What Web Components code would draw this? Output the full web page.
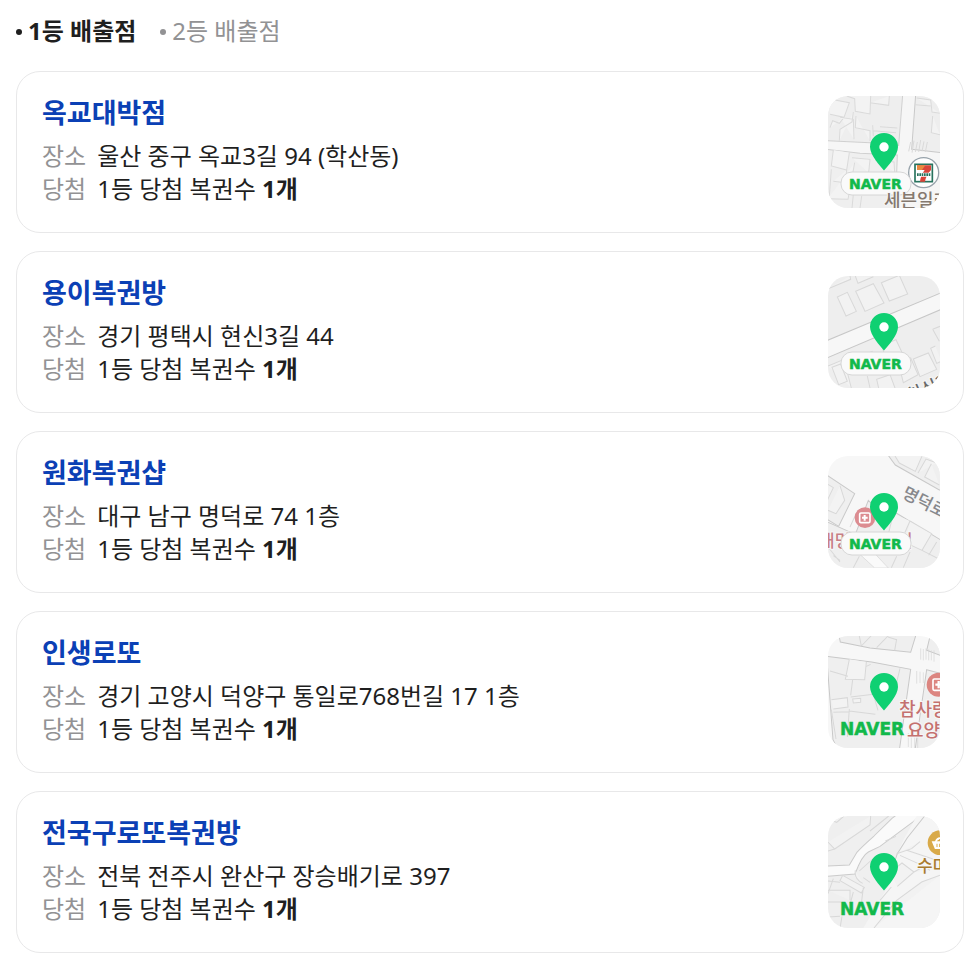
<!DOCTYPE html>
<html lang="ko">
<head>
<meta charset="utf-8">
<meta name="viewport" content="width=device-width, initial-scale=1">
<title>로또 배출점</title>
<style>
  html { background: #fff; }
  body {
    margin: 0;
    color: #1f1f1f;
    font: 24px/33px "Noto Sans", "Noto Sans CJK KR", sans-serif;
  }
</style>
</head>
<body>
<winner-page>
  <rank-tab slot="tabs" selected>1등 배출점</rank-tab>
  <rank-tab slot="tabs">2등 배출점</rank-tab>

  <shop-card name="옥교대박점" place="울산 중구 옥교3길 94 (학산동)" count="1개"><map-thumb slot="map" area="1"></map-thumb></shop-card>
  <shop-card name="용이복권방" place="경기 평택시 현신3길 44" count="1개"><map-thumb slot="map" area="2"></map-thumb></shop-card>
  <shop-card name="원화복권샵" place="대구 남구 명덕로 74 1층" count="1개"><map-thumb slot="map" area="3"></map-thumb></shop-card>
  <shop-card name="인생로또" place="경기 고양시 덕양구 통일로768번길 17 1층" count="1개"><map-thumb slot="map" area="4"></map-thumb></shop-card>
  <shop-card name="전국구로또복권방" place="전북 전주시 완산구 장승배기로 397" count="1개"><map-thumb slot="map" area="5"></map-thumb></shop-card>
</winner-page>

<script>
class WinnerPage extends HTMLElement {
  constructor() {
    super();
    this.attachShadow({ mode: "open" }).innerHTML = `
      <style>
        :host { display: block; padding: 14px 0 6px 16px; }
        nav { display: flex; gap: 24px; margin-bottom: 24px; }
        main { display: flex; flex-direction: column; gap: 18px; }
      </style>
      <nav aria-label="등수"><slot name="tabs"></slot></nav>
      <main><slot></slot></main>`;
  }
}

class RankTab extends HTMLElement {
  constructor() {
    super();
    this.attachShadow({ mode: "open" }).innerHTML = `
      <style>
        :host { display: block; color: #929294; }
        :host([selected]) { color: #1f1f1f; font-weight: 700; }
        button {
          display: flex; align-items: center; gap: 6px;
          margin: 0; padding: 0; border: 0; background: none;
          color: inherit; font: inherit; cursor: pointer;
        }
        button::before {
          content: ""; width: 6px; height: 6px; margin-top: 3px;
          border-radius: 50%; background: currentColor;
        }
      </style>
      <button type="button"><slot></slot></button>`;
    this.shadowRoot.querySelector("button").setAttribute("aria-pressed", this.hasAttribute("selected"));
  }
}

class ShopCard extends HTMLElement {
  connectedCallback() {
    if (this.shadowRoot) return;
    this.attachShadow({ mode: "open" }).innerHTML = `
      <style>
        :host { display: block; }
        article {
          display: flex; align-items: flex-start; justify-content: space-between; gap: 24px;
          padding: 24px 23px 24px 25px;
          border: 1px solid #e8e8e9; border-radius: 24px; background: #fff;
        }
        h3 { margin: 0 0 10px; font-size: 27px; line-height: 33px; font-weight: 700; }
        h3 a { color: #0b40b5; text-decoration: none; }
        dl { display: grid; grid-template-columns: auto 1fr; column-gap: 11px; margin: 0; }
        dt { color: #929294; }
        dd { margin: 0; }
        .map { flex: none; }
      </style>
      <article>
        <div>
          <h3><a href="#"></a></h3>
          <dl>
            <dt>장소</dt><dd class="place"></dd>
            <dt>당첨</dt><dd>1등 당첨 복권수 <b></b></dd>
          </dl>
        </div>
        <a class="map" href="#" aria-label="지도"><slot name="map"></slot></a>
      </article>`;
    const find = (s) => this.shadowRoot.querySelector(s);
    find("h3 a").textContent = this.getAttribute("name");
    find(".place").textContent = this.getAttribute("place");
    find("b").textContent = this.getAttribute("count");
  }
}

/* Streets and blocks are drawn on a grid three times finer than the thumbnail. */
const AREAS = {
  1: { pill: true, over: true, shapes: `
    <rect x="24" y="30" width="336" height="336" fill="#f6f6f6"/>
    <path d="M20 26H248L236 178L150 170L20 164Z" fill="#eee" stroke="#d0d0d0" stroke-width="3"/>
    <path d="M287 26H364V200L275 190Z" fill="#eee" stroke="#c9c9c9" stroke-width="3"/>
    <path d="M20 190L120 202L232 207L226 370H20Z" fill="#efefef" stroke="#d0d0d0" stroke-width="3"/>
    <g fill="#f3f3f3" stroke="#dadada" stroke-width="3">
      <path d="M30 85L72 94L88 50L24 38M72 94L58 112L38 104L30 125M80 30L104 38L106 76L150 84L152 30M150 50L206 58L208 30M100 78L96 108L60 130L58 164M108 90L106 125L150 134V165M60 94L100 100L102 160M158 118L160 150M160 134L228 140M180 122L232 126"/>
      <path d="M40 192L34 240L80 252L88 200M34 250L28 330M80 252L76 290L40 286M96 215L150 220L146 260M165 222L222 228L224 258M104 230L84 340L24 338M100 325L96 366M125 330L120 366"/>
      <path d="M290 36L332 42L336 78L360 82M332 60L286 56M338 90L334 140L360 146"/>
    </g>
    <path d="M272 168L266 196M282 164L276 200M292 168L286 198M302 162L296 198M312 166L306 196M322 168L316 198" stroke="#d9d9d9" stroke-width="3"/>
    <circle cx="311" cy="260" r="45" fill="#fff" stroke="#98a3ab" stroke-width="4"/>
    <rect x="285" y="235" width="52" height="52" fill="#fff" stroke="#28735e" stroke-width="5"/>
    <path d="M291 238H333V252Q318 268 315 287H300Q302 268 314 252H291Z" fill="#d9453a"/>
    <path d="M291 238H316L306 252H291Z" fill="#e98a3f"/>
    <path d="M289 260H333V272H289Z" fill="#fff"/>
    <path d="M291 262H296V270H291ZM298 262H303V270H298ZM305 262H310V270H305ZM312 262H317V270H312ZM319 262H324V270H319ZM326 262H331V270H326Z" fill="#28735e"/>`,
    labels: `<text x="56" y="111" font-size="18" fill="#85796f">세븐일레</text>` },
  2: { pill: true, shapes: `
    <rect x="24" y="30" width="336" height="336" fill="#eee"/>
    <path d="M20 224L364 80V130L20 276Z" fill="#f7f7f7" stroke="#c7c7c7" stroke-width="3"/>
    <g fill="#f2f2f2" stroke="#d8d8d8" stroke-width="3">
      <path d="M24 68L92 40L90 30M106 30L114 52L160 32M52 93L82 79L109 136L78 150ZM107 76L160 53L192 111L135 136ZM184 50L238 28L263 84L208 105Z"/>
      <path d="M24 300L72 280L94 366M36 304L62 294L82 346L56 356ZM186 240L228 221L250 268L200 290ZM280 279L325 261L350 310L300 332ZM338 190L360 181M338 190L358 226M346 240L332 247L350 292L364 286M235 290L272 276L294 326L250 350ZM150 366L142 330M176 366L170 340L210 326L225 366M118 272L158 256M24 335L44 366"/>
    </g>`,
    labels: `<text transform="translate(82 126) rotate(-23)" font-size="17" fill="#6a6a6a">현신3길</text>` },
  3: { pill: true, shapes: `
    <rect x="24" y="27" width="336" height="336" fill="#f7f7f7"/>
    <path d="M206 27L226 54L358 129H364V20H206Z" fill="#efefef" stroke="#c9c9c9" stroke-width="3"/>
    <path d="M20 84L104 140L56 238L20 216Z" fill="#efefef" stroke="#c9c9c9" stroke-width="3"/>
    <path d="M20 224L106 262L145 160L162 177L225 196L364 280V366H20Z" fill="#efefef" stroke="#c9c9c9" stroke-width="3"/>
    <g fill="#f3f3f3" stroke="#d8d8d8" stroke-width="3">
      <path d="M225 27L238 48L286 73L306 27M294 78L318 36L344 46L364 40M334 50L314 90L358 114"/>
      <path d="M24 112L40 122L20 164M60 116L74 160L48 200L24 190"/>
      <path d="M220 200L206 258L246 276L270 222M270 222L335 260L306 310L255 286M306 310L360 338M118 328L100 362M164 330L180 362M60 340L40 326M90 240L106 205M350 285L326 325M230 328L214 362M270 315L250 362M24 300L60 345"/>
    </g>
    <path d="M116 263L174 330L205 363H164L96 300Z" fill="#fafafa" stroke="#d5d5d5" stroke-width="2"/>
    <circle cx="135" cy="212" r="31" fill="#dc8c91"/>
    <rect x="119" y="198" width="31" height="29" rx="4" fill="none" stroke="#fff" stroke-width="5"/>
    <path d="M134 204V221M126 212H143" stroke="#fff" stroke-width="6"/>`,
    labels: `<text transform="translate(73 41) rotate(27)" font-size="17" fill="#87888c">명덕로</text>
      <text x="-9" y="91" font-size="17" fill="#c77f86">대명</text>
      <text x="69" y="91" font-size="17" fill="#c77f86">의</text>` },
  4: { shapes: `
    <rect x="24" y="27" width="336" height="336" fill="#f7f7f7"/>
    <path d="M56 20L61 45L150 63L272 76L289 20Z" fill="#efefef" stroke="#c8c8c8" stroke-width="3"/>
    <path d="M20 88L155 105L272 127L238 370H55L39 338Z" fill="#efefef" stroke="#c8c8c8" stroke-width="3"/>
    <path d="M320 70L364 86V20H332ZM320 128L364 140V370H285Z" fill="#efefef" stroke="#c8c8c8" stroke-width="3"/>
    <g fill="#f3f3f3" stroke="#d8d8d8" stroke-width="3">
      <path d="M118 27L124 57M124 57L153 27M170 62L204 27M224 70L230 36M204 30L230 38"/>
      <path d="M88 97L76 157L134 158L139 105M139 118L152 112M30 132L84 148M98 158L92 205M34 218L82 212L84 240L40 246M92 210L160 202M98 216L122 214V226L100 228ZM88 246L82 330M40 256L88 254M88 252L166 262M160 202L174 250M240 124L230 166M34 248L48 336"/>
    </g>
    <path d="M302 64V98M310 66V100M318 64V98M326 67V100M334 70V100M342 70V104M290 132V170M300 134V168M310 136V168M265 318V360M274 320V363M284 322V363M293 320V363" stroke="#d7d7d7" stroke-width="2"/>
    <circle cx="356" cy="173" r="36" fill="#dc8580"/>
    <rect x="339" y="156" width="36" height="34" rx="4" fill="none" stroke="#fff" stroke-width="5"/>
    <path d="M346 173H366M356 162V184" stroke="#fff" stroke-width="7"/>`,
    labels: `<text x="71" y="80" font-size="18" fill="#c4716f">참사랑</text>
      <text x="79" y="101" font-size="18" fill="#c4716f">요양원</text>` },
  5: { shapes: `
    <rect x="24" y="27" width="336" height="336" fill="#efefef"/>
    <path d="M20 177L88 174L110 137Q120 124 162 87L216 34L240 16H310L280 44L180 118L145 135Q126 145 105 201L20 208Z" fill="#fafafa" stroke="#cbcbcb" stroke-width="3"/>
    <path d="M290 27L250 100L232 140L206 180L226 206L186 268L162 310L130 363H364V27Z" fill="#f5f5f5"/>
    <path d="M314 27L262 92L232 140L210 205" fill="none" stroke="#c9c9c9" stroke-width="3"/>
    <g fill="#f2f2f2" stroke="#d8d8d8" stroke-width="3">
      <path d="M24 105L44 126L150 54L152 27M24 132L44 126M72 27L50 46L24 36M206 27L150 72"/>
      <path d="M68 205L133 241L124 258L60 221ZM106 190Q102 216 128 229M24 222L60 226M24 250L90 250V280M24 285H64M40 215L24 260M130 242L124 290M100 255L92 285M60 363L66 328M24 330L60 328"/>
      <path d="M196 102L228 88M240 145L322 182M260 130L350 160M210 196L246 168L282 195L232 238M282 195L312 178L330 190M214 240L180 280M118 192L158 156M150 226L130 212M162 363L230 280L305 225L360 205M230 140L275 125L300 104"/>
    </g>
    <circle cx="360" cy="107" r="37" fill="#d9aa49"/>
    <path d="M338 105H366V124H346ZM347 104Q350 92 364 93" fill="#fff" stroke="#fff" stroke-width="4"/>
    <path d="M351 110V120M359 110V120" stroke="#d9aa49" stroke-width="3"/>`,
    labels: `<text x="89" y="56" font-size="17" fill="#a97b2d">수마트</text>` },
};

class MapThumb extends HTMLElement {
  connectedCallback() {
    if (this.shadowRoot) return;
    const { shapes, labels, pill, over } = AREAS[this.getAttribute("area")];
    const top = Number(this.getAttribute("area")) < 3 ? -30 : -27;
    const logo = pill
      ? `<rect x="13" y="76" width="70" height="23" rx="11" fill="#fafafa" stroke="#d6d6d6"/>
         <text class="logo" x="21" y="93" font-size="14">NAVER</text>`
      : `<text class="logo" x="12" y="99" font-size="17">NAVER</text>`;
    const names = `<g class="names">${labels}</g>`;
    this.attachShadow({ mode: "open" }).innerHTML = `
      <style>
        :host { display: block; width: 112px; height: 112px; border-radius: 20px; overflow: hidden; }
        svg { display: block; }
        text { font-family: "Noto Sans CJK KR", sans-serif; font-weight: 500; }
        .logo {
          font-family: "DejaVu Sans", sans-serif; font-weight: 700;
          fill: #12b94b; stroke: #12b94b; stroke-width: .5;
        }
        .names { stroke: #f6f6f6; stroke-width: 2px; paint-order: stroke; }
      </style>
      <svg width="112" height="112" viewBox="0 0 112 112" aria-hidden="true">
        <g transform="scale(.33334) translate(-24 ${top})">${shapes}</g>
        ${over ? logo + names : names + logo}
        <path d="M56 74.500C52 70 42 59 42 51A14 14 0 0 1 70 51C70 59 60 70 56 74.500Z" fill="#0fd072"/>
        <circle cx="56" cy="51" r="4.700" fill="#fff"/>
      </svg>`;
  }
}

customElements.define("winner-page", WinnerPage);
customElements.define("rank-tab", RankTab);
customElements.define("map-thumb", MapThumb);
customElements.define("shop-card", ShopCard);
</script>
</body>
</html>
